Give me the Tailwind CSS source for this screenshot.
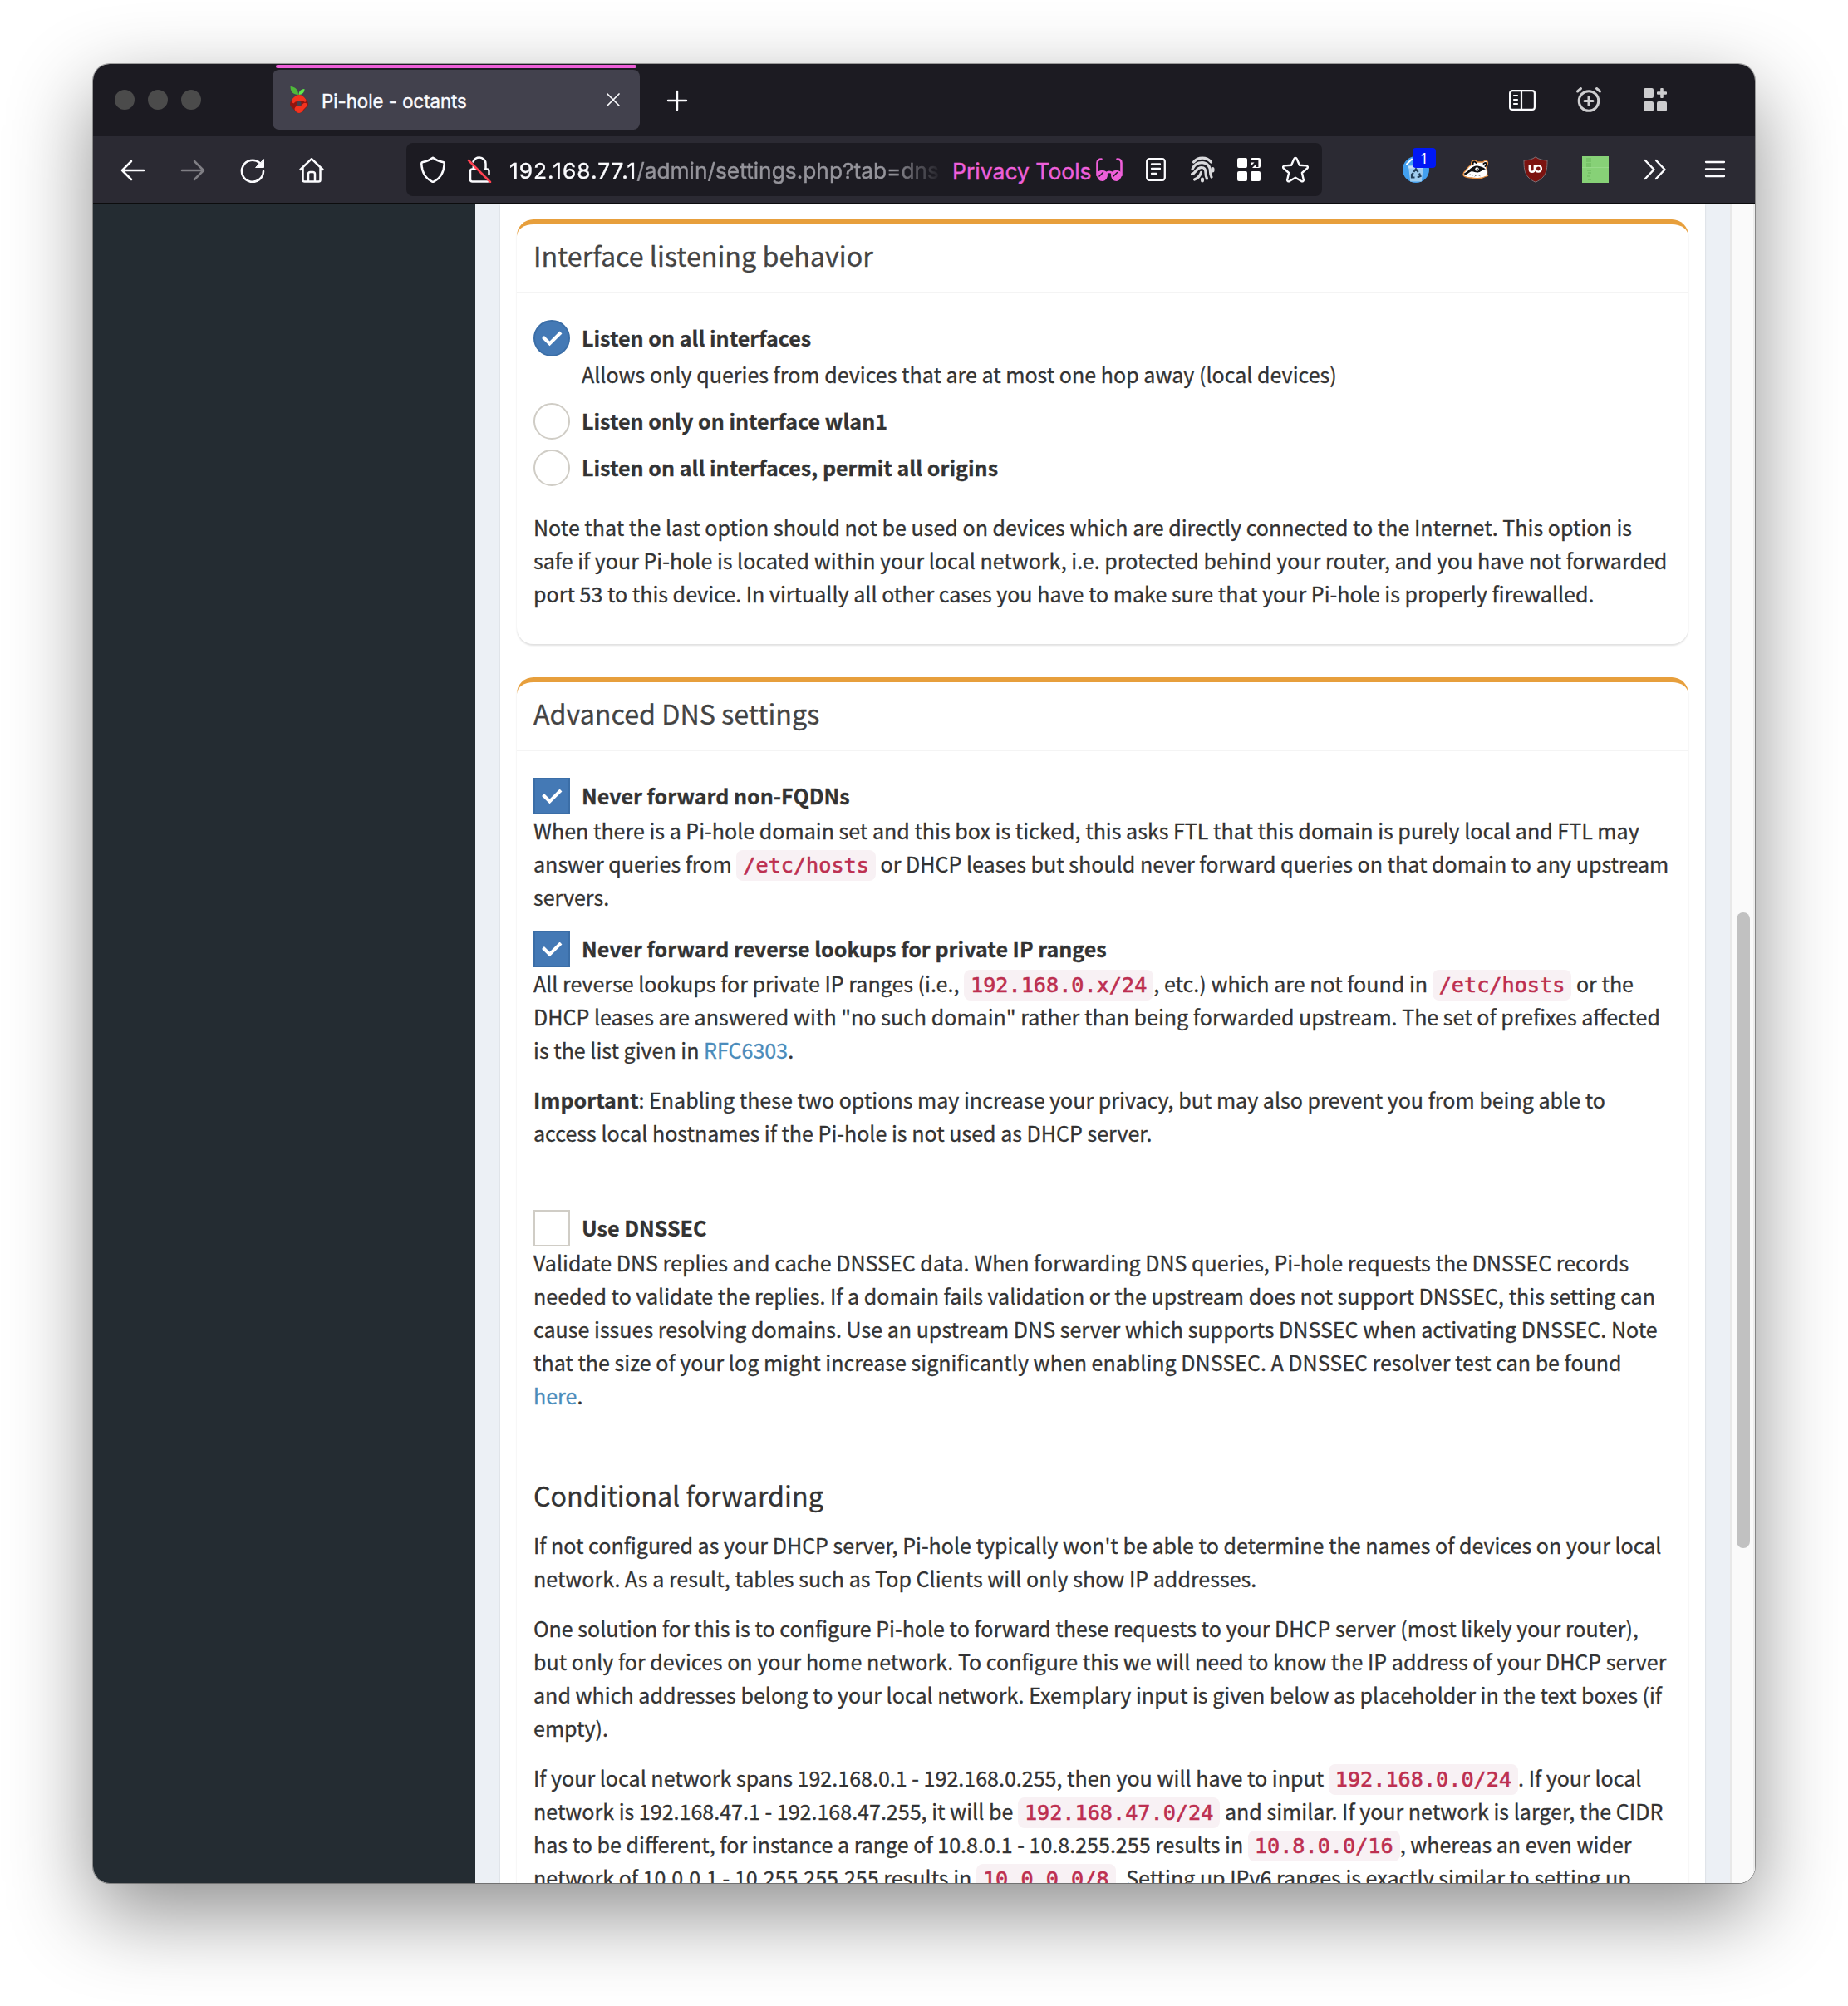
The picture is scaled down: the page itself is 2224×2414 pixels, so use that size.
<!DOCTYPE html>
<html lang="en">
<head>
<meta charset="utf-8">
<title>Pi-hole - octants</title>
<script src="https://cdn.jsdelivr.net/npm/@tailwindcss/browser@4"></script>
</head>
<body class="w-[2224px] h-[2414px] overflow-hidden bg-white pt-[77px] pl-[112px]">
<div class="w-[2000px] h-[2189px] rounded-[20px] shadow-[0_0_0_1px_rgba(0,0,0,0.32),0_36px_100px_rgba(0,0,0,0.45)]">
<div class="w-full h-full rounded-[20px] overflow-hidden flex flex-col bg-white">

  <!-- Tab strip -->
  <header class="h-[87px] shrink-0 bg-[#1c1b22] pt-[7px] flex items-start font-['Inter',sans-serif]">
    <div class="h-[72px] ml-[26px] flex items-center gap-4">
      <span class="size-6 rounded-full bg-[#4b4b4b]"></span>
      <span class="size-6 rounded-full bg-[#4b4b4b]"></span>
      <span class="size-6 rounded-full bg-[#4b4b4b]"></span>
    </div>
    <div class="relative h-[72px] w-[442px] ml-[86px] rounded-lg bg-[#42414d] flex items-center">
      <span class="absolute left-1 right-1 -top-[6px] h-1 rounded-[2px] bg-[#ee5fd9]"></span>
      <svg class="ml-4 size-8" viewBox="0 0 32 32">
        <path d="M15 10C9 10 5.500 6.500 5.500 0c6 .5 9.500 4 9.500 10z" fill="#4fb83a"/>
        <path d="M15.500 10c0-4 2.500-7 7-7 0 4-2.500 7-7 7z" fill="#5ee84a"/>
        <path d="M16 10c4 0 6 3 8 5.500 2 2 3 4 3 6 0 2-2 3.500-4 5.500s-4 5-7 5-5-3-7-5-4-3.500-4-5.500c0-2 1-4 3-6C10 13 12 10 16 10z" fill="#8e1510"/>
        <path d="M16 10c4 0 6 3 8 5.500 1 1.500 0 3-1 3.500-2-2-4.500-2-7-1.500-2.500.5-5 .5-6 2.500-1.500 1-3-1-2.500-4.500C10 13 12 10 16 10z" fill="#f2331f"/>
        <path d="M16 32c-3 0-5-3-5.500-5 .5-2.500 2-3.500 4.500-3.500 2.500 0 4.500-1 6-3 1.500-1.500 4-1 5 1.500 0 1.500-2 3-4 5s-3 5-6 5z" fill="#f2331f"/>
        <rect x="13.500" y="18" width="5" height="5.500" rx="1.500" fill="#42414d"/>
      </svg>
      <span class="ml-[11px] pt-[3px] text-[22.2px] leading-8 text-[#fbfbfe] whitespace-nowrap [-webkit-text-stroke:0.4px]">Pi-hole - octants</span>
      <svg class="ml-auto mr-4 size-8" viewBox="0 0 32 32" fill="none" stroke="#fbfbfe" stroke-width="1.700" stroke-linecap="round"><path d="M9 9l14 14M23 9L9 23"/></svg>
    </div>
    <div class="h-[72px] ml-[29px] flex items-center">
      <svg class="size-8" viewBox="0 0 32 32" fill="none" stroke="#fbfbfe" stroke-width="2.400" stroke-linecap="round"><path d="M16 6v22M5 17h22"/></svg>
    </div>
    <div class="h-[72px] ml-auto mr-[104px] flex items-center gap-12">
      <svg class="size-8" viewBox="0 0 32 32" fill="none" stroke="#fbfbfe" stroke-width="2.200" stroke-linecap="round"><rect x="1.100" y="5.100" width="29.800" height="22.800" rx="3"/><path d="M15 5v23M6 11h4M6 16h4M6 21h4"/></svg>
      <svg class="size-8" viewBox="0 0 32 32" fill="none" stroke="#cdcdcf" stroke-width="3" stroke-linecap="round"><circle cx="16" cy="17.500" r="11.800"/><path d="M16 12.500v10M11 17.500h10M2.500 6l4-3.500M29.500 6l-4-3.500"/></svg>
      <svg class="size-8" viewBox="0 0 32 32" fill="#cdcdcf"><rect x="2" y="2" width="12" height="12" rx="2"/><rect x="2" y="18" width="12" height="12" rx="2"/><rect x="18" y="18" width="12" height="12" rx="2"/><path d="M22.200 3a1 1 0 0 1 1-1h1.600a1 1 0 0 1 1 1v3.200H29a1 1 0 0 1 1 1v1.600a1 1 0 0 1-1 1h-3.200V13a1 1 0 0 1-1 1h-1.600a1 1 0 0 1-1-1V9.800H19a1 1 0 0 1-1-1V7.200a1 1 0 0 1 1-1h3.200z"/></svg>
    </div>
  </header>

  <!-- Navigation toolbar -->
  <nav class="h-[82px] shrink-0 bg-[#2b2a33] border-b-2 border-[#0c0c0d] flex items-center pl-8 font-['Inter',sans-serif]">
    <div class="flex items-center gap-10">
      <svg class="size-8" viewBox="0 0 32 32" fill="none" stroke="#fbfbfe" stroke-width="2.500" stroke-linecap="round" stroke-linejoin="round"><path d="M29 17H3M14 6L3 17l11 11"/></svg>
      <svg class="size-8" viewBox="0 0 32 32" fill="none" stroke="#7f7e84" stroke-width="2.500" stroke-linecap="round" stroke-linejoin="round"><path d="M3 17h26M18 6l11 11-11 11"/></svg>
      <svg class="size-8" viewBox="0 0 32 32" fill="none" stroke="#fbfbfe" stroke-width="2.600" stroke-linecap="round"><path d="M29 18A13 13 0 1 1 24.500 8"/><path d="M29.500 4v9.500h-9.500z" fill="#fbfbfe" stroke-width="1" stroke-linejoin="round"/></svg>
      <svg class="size-8 -ml-px" viewBox="0 0 32 32" fill="none" stroke="#fbfbfe" stroke-width="2.500" stroke-linecap="round" stroke-linejoin="round"><path d="M2.500 16L16 3.200 29.500 16M5.500 14v14.500a2 2 0 0 0 2 2h17a2 2 0 0 0 2-2V14M12 30v-8.500a2.500 2.500 0 0 1 2.500-2.500h3a2.500 2.500 0 0 1 2.500 2.500V30"/></svg>
    </div>
    <div class="ml-[98px] w-[1102px] h-16 rounded-lg bg-[#1c1b22] flex items-center pl-4 pr-4">
      <svg class="size-8 shrink-0" viewBox="0 0 32 32" fill="none" stroke="#fbfbfe" stroke-width="2.500" stroke-linejoin="round"><path d="M16 1.800c3.500 2.800 8 4.600 12 5.300 1.200.2 1.800 1 1.700 2.200-.5 10-4.700 17.300-12.400 21-.9.500-1.700.5-2.600 0C7 26.600 2.800 19.300 2.300 9.300 2.200 8.100 2.800 7.300 4 7.100c4-.7 8.500-2.500 12-5.300z"/></svg>
      <svg class="ml-6 size-8 shrink-0" viewBox="0 0 32 32" fill="none" stroke="#fbfbfe" stroke-width="2.500" stroke-linecap="round"><path d="M8.500 6.500C10 3 13 1.500 16 1.500c4 0 7.500 3.500 7.500 7.500v6.500M23 15.500h2a2.500 2.500 0 0 1 2.500 2.500v4M11 15.500H7.500A2.500 2.500 0 0 0 5 18v10a2.500 2.500 0 0 0 2.500 2.500H26M8.800 12v3"/><path d="M3 5l26 26" stroke="#ff4050"/></svg>
      <div class="ml-5 pt-[3px] w-[524px] mr-[9px] shrink-0 overflow-hidden whitespace-nowrap text-[26.3px] leading-10 text-[#95949b] [-webkit-text-stroke:0.4px] [mask-image:linear-gradient(to_right,black_460px,transparent_522px)]"><span class="text-[#fbfbfe] tracking-[1px]">192.168.77.1</span>/admin/settings.php?tab=dns</div>
      <span class="pt-[3px] w-[168px] shrink-0 whitespace-nowrap text-[26.5px] leading-10 text-[#ee5fd9] [-webkit-text-stroke:0.4px]">Privacy Tools</span>
      <svg class="ml-[5px] size-8 shrink-0" viewBox="0 0 32 32" fill="none" stroke="#ee5fd9" stroke-width="2.600" stroke-linecap="round"><path d="M6.500 3.500C3.500 3.500 1.500 5 1.500 8v15M25.500 3.500c3 0 5 1.500 5 4.500v15M12 20.500c2.500-2 5.500-2 8 0"/><path d="M1 22c0-3.500 3-5 6.500-5S14 18.500 14 22.500 11 30 7.500 30 1 26.500 1 22zM18 22.500c0-4 3-5.500 6.500-5.500S31 18.500 31 22s-3 8-6.500 8-6.500-3.500-6.500-7.500z" fill="#ee5fd9" stroke="none"/><path d="M4 24l4.500-4.500M21 24l4.500-4.500" stroke="#1c1b22" stroke-width="1.500"/></svg>
      <svg class="ml-6 size-8 shrink-0" viewBox="0 0 32 32" fill="none" stroke="#fbfbfe" stroke-width="2.300" stroke-linecap="round"><rect x="5.200" y="3.200" width="21.600" height="25.600" rx="3"/><path d="M11 9.500h10M11 15h10M11 21h5.500"/></svg>
      <svg class="ml-6 size-8 shrink-0" viewBox="0 0 32 32" fill="none" stroke="#d9d9dc" stroke-width="3.200" stroke-linecap="round"><path d="M5.500 7C11 .5 21 .5 26.500 7"/><path d="M4 15.500C6 10.500 10.500 7.600 15.500 7.600c6.500 0 10 4.900 10 10.900 0 3 .5 4.500 1.500 6.500"/><path d="M3.500 21.500c5-1.500 5-8 11.500-8 4 0 5 3 5 6.500s.5 5 1.500 7"/><path d="M6.500 28c5-2 7-5 8-8.500"/><path d="M28.500 15v2.500M16 27.500v2" stroke-width="4"/></svg>
      <svg class="ml-6 size-8 shrink-0" viewBox="0 0 32 32" fill="#fff"><rect x="2" y="2" width="12" height="12" rx="2"/><rect x="2" y="18" width="12" height="12" rx="2"/><rect x="18" y="18" width="12" height="12" rx="2"/><rect x="18" y="2" width="12" height="12" rx="2"/><path d="M17.500 14.500l7.500-7.500M19 6h7v7" fill="none" stroke="#1c1b22" stroke-width="2.800"/></svg>
      <svg class="ml-6 size-8 shrink-0" viewBox="0 0 32 32" fill="none" stroke="#fbfbfe" stroke-width="2.400" stroke-linejoin="round"><path d="M14.400 3c.6-1.500 2.600-1.500 3.200 0l3.300 7.700 8.300.7c1.700.2 2.300 2 1 3.100l-6.300 5.500 1.900 8.200c.4 1.600-1.200 2.700-2.600 1.900L16 25.700l-7.200 4.400c-1.400.8-3-.3-2.600-1.900l1.900-8.200-6.300-5.500c-1.300-1.100-.7-2.900 1-3.100l8.300-.7z"/></svg>
    </div>
    <div class="ml-[97px] flex items-center gap-10">
      <div class="relative size-8">
        <svg class="size-8" viewBox="0 0 32 32"><circle cx="16" cy="16" r="16" fill="#42a0f0"/><path d="M5 9.500l6-6" stroke="#fff" stroke-width="2" stroke-linecap="round"/><path d="M7 11.500h18l-2.200 19H9.200z" fill="#9fcdf0"/><path d="M7 11.500h18l-.4 3H7.400z" fill="#c5e3fa"/><g fill="none" stroke="#23405a" stroke-width="2.200"><path d="M13.300 18.800l2.700-3.500 2.700 3.500M20 20.500l1.500 3.500-3.700 1.500M14.500 25.500h-3.500l0-3.500 2-2"/></g></svg>
        <span class="absolute left-3 -top-[10px] w-7 h-6 rounded-[4px] bg-[#0018f5] text-white text-[19px] leading-6 text-center font-['Open_Sans',sans-serif]">1</span>
      </div>
      <svg class="size-8" viewBox="0 0 32 32" stroke-linejoin="round" stroke-linecap="round"><path d="M10.500 10.500c0-3 1-5.500 3.500-5.500 2 0 3 1 4 2h6.500c2-2 5.500-2.500 6 .5.300 2-1 4-2 5 1 3 1.500 6 1 9l1 2-3 1-3.500 1.500c-5 1-9 1-13 0-3 0-7.500-1-9.500-2.500-1-2 0-4.500 2-6 2-2.500 3.500-5.500 7-7z" fill="#fff" stroke="#e08a3c" stroke-width="1.300"/><path d="M2 20.500c4-1.500 8-7.500 14-9 4 0 8 1 12 4-4 .5-6 4-10 4-3.500 0-5-2-8-1-3 1.500-4.500 4-7.500 4z" fill="#111"/><path d="M12.500 9.500c0-2 .5-3 1.700-3s1.800.8 2.300 1.500M25.500 9c1-1.500 3.500-1.500 3.500 0s-.8 2-1.500 3" fill="none" stroke="#111" stroke-width="2"/><circle cx="17.500" cy="15.500" r="2.200" fill="#fff"/><circle cx="17.800" cy="15.600" r="1" fill="#111"/><path d="M15 24c2-2 4-2 6-.5M9 22l3 1" stroke="#555" fill="none"/></svg>
      <svg class="size-8" viewBox="0 0 32 32"><path d="M16 .8c4 3 8.500 4 14 4.200 0 12-1 20.500-14 26.200C3 25.500 2 17 2 5 7.500 4.800 12 3.800 16 .8z" fill="#7c1310" stroke="#7e6f74" stroke-width="1"/><path d="M8.800 10.800v5c0 4 6 4 6 0v-5" fill="none" stroke="#fff" stroke-width="2.400"/><circle cx="19.300" cy="15" r="3.600" fill="none" stroke="#fff" stroke-width="2.400"/></svg>
      <svg class="size-8" viewBox="0 0 32 32"><rect width="32" height="32" fill="#87d177"/><path d="M0 13.500h32" stroke="#97da89"/><path d="M5 3h6M5 6h6M5 9h6M5 12h6M6 17h5M7 20h4M6 24h4M7 28h4" stroke="#74bf66" stroke-width="1.600"/></svg>
      <svg class="size-8" viewBox="0 0 32 32" fill="none" stroke="#fbfbfe" stroke-width="2.500" stroke-linecap="round" stroke-linejoin="round"><path d="M4 5l10.500 11L4 27M17 5l10.500 11L17 27"/></svg>
      <svg class="size-8" viewBox="0 0 32 32" fill="none" stroke="#fbfbfe" stroke-width="2.300" stroke-linecap="round"><path d="M5 7h22M5 15.500h22M5 24h22"/></svg>
    </div>
  </nav>

  <!-- Page -->
  <div class="flex-1 min-h-0 flex">
    <aside class="w-[460px] shrink-0 bg-[#242c32]"></aside>
    <div class="w-[1510px] shrink-0 bg-[#ecf0f5] px-[30px] overflow-hidden">
      <main class="w-[1450px] bg-white shadow-[0_1px_2px_rgba(0,0,0,0.15)] px-5 pt-[18px] h-[2400px] text-[25.065px] leading-10 text-[#333] whitespace-nowrap font-['Noto_Sans_CJK_SC',sans-serif] [-webkit-text-stroke:0.3px]">

        <section class="rounded-[20px] border-t-[6px] border-[#e79f3c] bg-white shadow-[0_2px_2px_rgba(0,0,0,0.12)]">
          <div class="h-[83px] border-b-2 border-[#f4f4f4] px-5 pt-[17px]"><h3 class="text-[32.25px] leading-10 text-[#444]">Interface listening behavior</h3></div>
          <div class="px-5 pt-8 pb-[41px]">
            <div class="flex items-center gap-[14px] h-11">
              <svg class="size-11" viewBox="0 0 44 44"><circle cx="22" cy="22" r="21" fill="#4479b5" stroke="#3b6ea7" stroke-width="2"/><path d="M11.500 20.500l8 8 13.500-13.500" fill="none" stroke="#fff" stroke-width="4"/></svg>
              <b class="pb-[2px]">Listen on all interfaces</b>
            </div>
            <p class="pl-[58px] mt-px">Allows only queries from devices that are at most one hop away (local devices)</p>
            <div class="flex items-center gap-[14px] h-11 mt-[15px]"><span class="size-11 rounded-full border-2 border-[#d0cdc6]"></span><b class="pb-[2px]">Listen only on interface wlan1</b></div>
            <div class="flex items-center gap-[14px] h-11 mt-3"><span class="size-11 rounded-full border-2 border-[#d0cdc6]"></span><b class="pb-[2px]">Listen on all interfaces, permit all origins</b></div>
            <p class="mt-[29px]">Note that the last option should not be used on devices which are directly connected to the Internet. This option is<br>safe if your Pi-hole is located within your local network, i.e. protected behind your router, and you have not forwarded<br>port 53 to this device. In virtually all other cases you have to make sure that your Pi-hole is properly firewalled.</p>
          </div>
        </section>

        <section class="mt-10 rounded-[20px] border-t-[6px] border-[#e79f3c] bg-white shadow-[0_2px_2px_rgba(0,0,0,0.12)]">
          <div class="h-[83px] border-b-2 border-[#f4f4f4] px-5 pt-[17px]"><h3 class="text-[32.25px] leading-10 text-[#444]">Advanced DNS settings</h3></div>
          <div class="px-5 pt-8 h-[1500px]">
            <div class="flex items-center gap-[14px] h-11">
              <svg class="size-11" viewBox="0 0 44 44"><rect x="1" y="1" width="42" height="42" fill="#4479b5" stroke="#3b6ea7" stroke-width="2"/><path d="M11.500 20.500l8 8 13.500-13.500" fill="none" stroke="#fff" stroke-width="4"/></svg>
              <b class="pb-[2px]">Never forward non-FQDNs</b>
            </div>
            <p class="-mt-px">When there is a Pi-hole domain set and this box is ticked, this asks FTL that this domain is purely local and FTL may<br>answer queries from <code class="font-['DejaVu_Sans_Mono',monospace] text-[25.2px] leading-none px-2 py-1 rounded-lg bg-[#f8f1f4] text-[#bd2f50] [-webkit-text-stroke:0.6px]">/etc/hosts</code> or DHCP leases but should never forward queries on that domain to any upstream<br>servers.</p>
            <div class="flex items-center gap-[14px] h-11 mt-[21px]">
              <svg class="size-11" viewBox="0 0 44 44"><rect x="1" y="1" width="42" height="42" fill="#4479b5" stroke="#3b6ea7" stroke-width="2"/><path d="M11.500 20.500l8 8 13.500-13.500" fill="none" stroke="#fff" stroke-width="4"/></svg>
              <b class="pb-[2px]">Never forward reverse lookups for private IP ranges</b>
            </div>
            <p class="-mt-px">All reverse lookups for private IP ranges (i.e., <code class="font-['DejaVu_Sans_Mono',monospace] text-[25.2px] leading-none px-2 py-1 rounded-lg bg-[#f8f1f4] text-[#bd2f50] [-webkit-text-stroke:0.6px]">192.168.0.x/24</code>, etc.) which are not found in <code class="font-['DejaVu_Sans_Mono',monospace] text-[25.2px] leading-none px-2 py-1 rounded-lg bg-[#f8f1f4] text-[#bd2f50] [-webkit-text-stroke:0.6px]">/etc/hosts</code> or the<br>DHCP leases are answered with "no such domain" rather than being forwarded upstream. The set of prefixes affected<br>is the list given in <a class="text-[#4b8cbb]">RFC6303</a>.</p>
            <p class="mt-5"><b>Important</b>: Enabling these two options may increase your privacy, but may also prevent you from being able to<br>access local hostnames if the Pi-hole is not used as DHCP server.</p>
            <div class="flex items-center gap-[14px] h-11 mt-[73px]"><span class="size-11 border-2 border-[#d0cdc6]"></span><b class="pb-[2px]">Use DNSSEC</b></div>
            <p class="-mt-px">Validate DNS replies and cache DNSSEC data. When forwarding DNS queries, Pi-hole requests the DNSSEC records<br>needed to validate the replies. If a domain fails validation or the upstream does not support DNSSEC, this setting can<br>cause issues resolving domains. Use an upstream DNS server which supports DNSSEC when activating DNSSEC. Note<br>that the size of your log might increase significantly when enabling DNSSEC. A DNSSEC resolver test can be found<br><a class="text-[#4b8cbb]">here</a>.</p>
            <h4 class="mt-20 text-[32.25px] leading-10">Conditional forwarding</h4>
            <p class="mt-5">If not configured as your DHCP server, Pi-hole typically won't be able to determine the names of devices on your local<br>network. As a result, tables such as Top Clients will only show IP addresses.</p>
            <p class="mt-5">One solution for this is to configure Pi-hole to forward these requests to your DHCP server (most likely your router),<br>but only for devices on your home network. To configure this we will need to know the IP address of your DHCP server<br>and which addresses belong to your local network. Exemplary input is given below as placeholder in the text boxes (if<br>empty).</p>
            <p class="mt-5">If your local network spans 192.168.0.1 - 192.168.0.255, then you will have to input <code class="font-['DejaVu_Sans_Mono',monospace] text-[25.2px] leading-none px-2 py-1 rounded-lg bg-[#f8f1f4] text-[#bd2f50] [-webkit-text-stroke:0.6px]">192.168.0.0/24</code>. If your local<br>network is 192.168.47.1 - 192.168.47.255, it will be <code class="font-['DejaVu_Sans_Mono',monospace] text-[25.2px] leading-none px-2 py-1 rounded-lg bg-[#f8f1f4] text-[#bd2f50] [-webkit-text-stroke:0.6px]">192.168.47.0/24</code> and similar. If your network is larger, the CIDR<br>has to be different, for instance a range of 10.8.0.1 - 10.8.255.255 results in <code class="font-['DejaVu_Sans_Mono',monospace] text-[25.2px] leading-none px-2 py-1 rounded-lg bg-[#f8f1f4] text-[#bd2f50] [-webkit-text-stroke:0.6px]">10.8.0.0/16</code>, whereas an even wider<br>network of 10.0.0.1 - 10.255.255.255 results in <code class="font-['DejaVu_Sans_Mono',monospace] text-[25.2px] leading-none px-2 py-1 rounded-lg bg-[#f8f1f4] text-[#bd2f50] [-webkit-text-stroke:0.6px]">10.0.0.0/8</code>. Setting up IPv6 ranges is exactly similar to setting up</p>
          </div>
        </section>
      </main>
    </div>
    <div class="w-[30px] shrink-0 bg-[#fafafa] border-l-2 border-l-[#e8e8e8] border-r-2 border-r-[#ededed] pl-[6px] pt-[852px]">
      <div class="w-4 h-[765px] rounded-full bg-[#c1c1c1]"></div>
    </div>
  </div>
</div>
</div>
</body>
</html>
